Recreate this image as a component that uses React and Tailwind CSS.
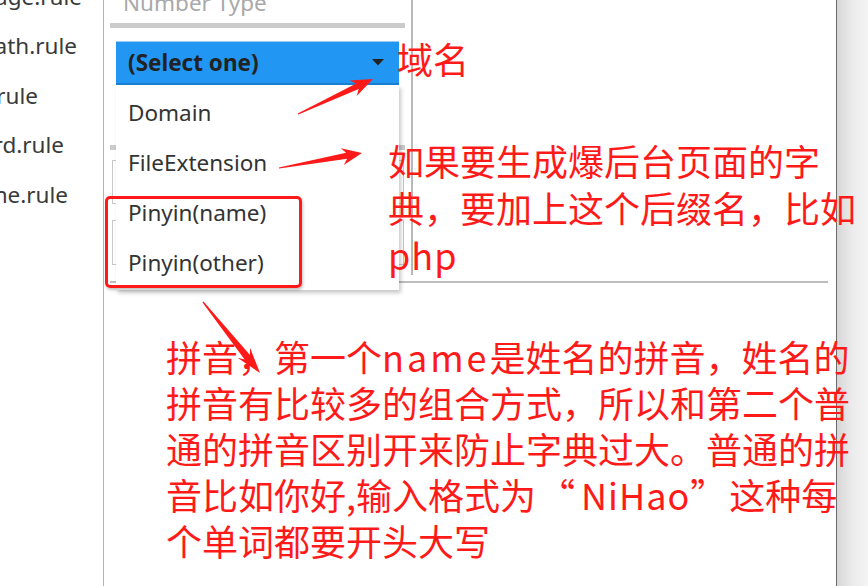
import React from "react";

const RED = "#ff1a1a";

function arrowPoints(tx, ty, hx, hy, hl, hw, sw) {
  const dx = hx - tx, dy = hy - ty;
  const L = Math.hypot(dx, dy);
  const ux = dx / L, uy = dy / L;
  const nx = -uy, ny = ux;
  const p = (x, y) => `${x.toFixed(1)},${y.toFixed(1)}`;
  const neckX = hx - ux * hl * 0.78, neckY = hy - uy * hl * 0.78;
  const wingX = hx - ux * hl, wingY = hy - uy * hl;
  return [
    p(tx + nx * 0.6, ty + ny * 0.6),
    p(neckX + nx * sw / 2, neckY + ny * sw / 2),
    p(wingX + nx * hw / 2, wingY + ny * hw / 2),
    p(hx, hy),
    p(wingX - nx * hw / 2, wingY - ny * hw / 2),
    p(neckX - nx * sw / 2, neckY - ny * sw / 2),
    p(tx - nx * 0.6, ty - ny * 0.6),
  ].join(" ");
}

const sideItems = [
  { name: "language.rule", cls: "pr-[21px]" },
  { name: "path.rule", cls: "pr-[26px]" },
  { name: "sql.rule", cls: "pr-[65px]" },
  { name: "password.rule", cls: "pr-[39px]" },
  { name: "phone.rule", cls: "pr-[35px]" },
];

const options = ["Domain", "FileExtension", "Pinyin(name)", "Pinyin(other)"];

export default function App() {
  return (
    <div
      className="relative flex w-[868px] h-[586px] overflow-hidden bg-white"
      style={{ fontFamily: '"Noto Sans", "Open Sans", sans-serif' }}
    >
      {/* sidebar */}
      <div className="w-[104px] shrink-0 overflow-hidden border-r border-[#b3b3b3] text-[22.5px] text-[#3a3a3a]">
        <div className="mt-[-28px]">
          {sideItems.map((it) => (
            <div
              key={it.name}
              className={`flex h-[49.5px] items-center justify-end whitespace-nowrap ${it.cls}`}
            >
              {it.name}
            </div>
          ))}
        </div>
      </div>

      {/* main panel */}
      <div className="w-[733px] shrink-0 border-r border-[#6a6a6a] bg-white">
        <div className="ml-[6px] flex h-[275px] w-[303px] flex-col border-r-2 border-[#b8b8b8] pr-[6px]">
          <div className="mt-[-12px] h-[30px] pl-[13px] text-[22.5px] leading-[30px] text-[#a9a9a9] whitespace-nowrap">
            Number Type
          </div>
          <div className="mt-[5px] h-[5px] w-[295px] bg-[#cbcbcb]" />

          {/* select */}
          <div className="relative ml-[6px] mt-[13px] w-[283px]">
            <div className="flex h-[44px] items-center justify-between border-t border-[#9fc9ee] border-b-2 border-b-[#1a7fd0] bg-[#2196f3] pl-[12px] pr-[15px]">
              <span className="text-[22.5px] font-bold text-[#222]">(Select one)</span>
              <svg width="12" height="7" viewBox="0 0 12 7">
                <polygon points="0,0 12,0 6,6.5" fill="#222" />
              </svg>
            </div>
            <div className="absolute left-0 top-full z-10 w-[283px] bg-white pt-[3px] pb-[2px] shadow-[2px_3px_4px_rgba(0,0,0,0.22)]">
              {options.map((o) => (
                <div
                  key={o}
                  className="flex h-[50px] items-center pl-[12px] text-[22.5px] text-[#333]"
                >
                  {o}
                </div>
              ))}
            </div>
          </div>

          <div className="mt-[60px] h-[5px] w-[295px] bg-[#cbcbcb]" />
          <div className="ml-[2px] mt-[10px] h-[44px] w-[292px] border border-[#c8c8c8]" />
          <div className="ml-[2px] mt-[16px] h-[45px] w-[292px] border border-[#c8c8c8]" />
        </div>
        <div className="ml-[6px] mt-[6px] h-[2px] w-[718px] bg-[#bdbdbd]" />
      </div>

      {/* right gutter */}
      <div className="flex-1 bg-gradient-to-r from-[#d6d6d6] via-[#ececec] to-[#f4f4f4]" />

      {/* annotations */}
      <div
        className="pointer-events-none absolute inset-0 z-20 text-[36px] leading-[47px]"
        style={{
          color: RED,
          fontFamily: '"Noto Sans CJK SC", "Noto Sans", sans-serif',
        }}
      >
        <div className="absolute left-[397px] top-[35px] whitespace-nowrap">域名</div>
        <div className="absolute left-[388px] top-[137px] whitespace-nowrap">
          如果要生成爆后台页面的字
          <br />
          典，要加上这个后缀名，比如
          <br />
          <span className="tracking-[1px]">php</span>
        </div>
        <div className="absolute left-[166px] top-[333px] whitespace-nowrap leading-[46px]">
          拼音，第一个<span className="tracking-[3px]">name</span>是姓名的拼音，姓名的
          <br />
          拼音有比较多的组合方式，所以和第二个普
          <br />
          通的拼音区别开来防止字典过大。普通的拼
          <br />
          音比如你好,输入格式为<span className="ml-[3px] mr-[6px]">“</span><span className="tracking-[1px]">NiHao</span><span className="mr-[3px]">”</span>这种每
          <br />
          个单词都要开头大写
        </div>
        <div className="absolute left-[105px] top-[196px] h-[92px] w-[197px] rounded-[5px] border-[3px] border-[#ff1a1a] shadow-[1px_2px_3px_rgba(0,0,0,0.25)]" />
        <svg className="absolute left-0 top-0" width="868" height="586">
          <polygon points={arrowPoints(298, 114, 373, 79, 22, 17, 6)} fill={RED} />
          <polygon points={arrowPoints(279, 168, 362, 153, 20, 17, 6)} fill={RED} />
          <polygon points={arrowPoints(203, 302, 260, 373, 26, 16, 7)} fill={RED} />
        </svg>
      </div>
    </div>
  );
}
